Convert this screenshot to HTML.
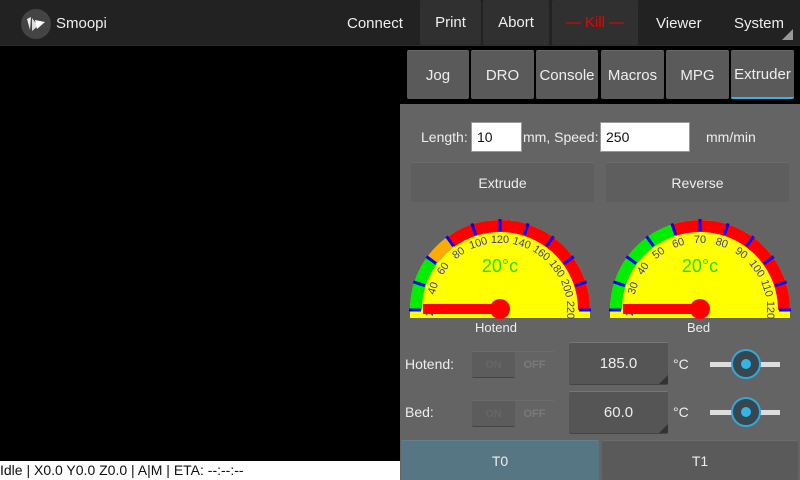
<!DOCTYPE html>
<html><head><meta charset="utf-8"><style>
*{margin:0;padding:0;box-sizing:border-box}
body{width:800px;height:480px;background:#000;font-family:"Liberation Sans",sans-serif;position:relative;overflow:hidden;color:#eee}
.a{position:absolute}
.hb{position:absolute;top:0;height:45px;background:#303030;border-radius:2px;color:#eee;font-size:15px;display:flex;align-items:center;justify-content:center}
.tab{position:absolute;top:50px;height:49px;background:#5a5a5a;border-top:1px solid #6a6a6a;border-radius:2px;font-size:15px;display:flex;align-items:center;justify-content:center;color:#eee}
.btn{position:absolute;background:#5e5e5e;border-top:1px solid #6c6c6c;border-radius:2px;font-size:14px;display:flex;align-items:center;justify-content:center;color:#eee}
.lbl{position:absolute;font-size:14px;color:#eee}
.inp{position:absolute;background:#fff;border:1px solid #999;color:#111;font-size:14px;padding-left:5px;display:flex;align-items:center}
.num{position:absolute;background:#555;border-top:1px solid #777;border-bottom:1px solid #444;border-radius:2px;font-size:15px;display:flex;align-items:center;justify-content:center;color:#eee;overflow:hidden}
.num:after{content:"";position:absolute;right:0;bottom:0;border-left:9px solid transparent;border-bottom:9px solid #333}
.sw{position:absolute;width:82px;height:27px}
.sw .on{position:absolute;left:0;top:0;width:43px;height:27px;background:#5c5c5c;border-top:1px solid #6c6c6c;border-bottom:1px solid #444;border-radius:2px;font-size:11px;font-weight:bold;color:#666;display:flex;align-items:center;justify-content:center}
.sw .off{position:absolute;left:43px;top:0;width:39px;height:27px;border-top:1px solid #6c6c6c;font-size:11px;font-weight:bold;color:#7a7a7a;display:flex;align-items:center;justify-content:center}
.sl{position:absolute;width:70px;height:30px}
.sl .tr{position:absolute;left:0;top:13px;width:70px;height:5px;background:#ddd}
.sl .k{position:absolute;left:21px;top:0;width:30px;height:30px;border-radius:50%;background:#36474f;border:2px solid #33a8dc}
.sl .k:after{content:"";position:absolute;left:8px;top:8px;width:10px;height:10px;border-radius:50%;background:#33b5e5}
</style></head><body>
<div class="a" style="left:0;top:0;width:800px;height:46px;background:#222;border-bottom:1px solid #2c2c2c"></div>
<div class="a" style="left:21px;top:9px;width:30px;height:30px;border-radius:50%;background:#444"></div>
<svg class="a" style="left:21px;top:9px" width="30" height="30"><polygon points="6,10 10,8 9,21" fill="#eee"/><polygon points="11,9 17,17 11,22" fill="#ddd"/><polygon points="14,11 24,13 16,20" fill="#fff"/></svg>
<div class="a" style="left:56px;top:15px;font-size:15px;color:#eee">Smoopi</div>
<div class="a" style="left:347px;top:15px;font-size:15px;color:#eee">Connect</div>
<div class="hb" style="left:420px;width:61px">Print</div>
<div class="hb" style="left:483px;width:66px">Abort</div>
<div class="hb" style="left:552px;width:86px;color:#e00">— Kill —</div>
<div class="a" style="left:656px;top:15px;font-size:15px;color:#eee">Viewer</div>
<div class="a" style="left:734px;top:15px;font-size:15px;color:#eee">System</div>
<div class="a" style="left:782px;top:29px;border-left:11px solid transparent;border-bottom:11px solid #999"></div>

<div class="tab" style="left:407px;width:62px">Jog</div>
<div class="tab" style="left:471px;width:63px">DRO</div>
<div class="tab" style="left:536px;width:62px">Console</div>
<div class="tab" style="left:601px;width:63px">Macros</div>
<div class="tab" style="left:666px;width:63px">MPG</div>
<div class="tab" style="left:731px;width:63px;border-bottom:2px solid #33b5e5">Extruder</div>

<div class="a" style="left:400px;top:104px;width:400px;height:376px;background:#646464"></div>
<div class="lbl" style="left:421px;top:129px">Length:</div>
<div class="inp" style="left:471px;top:122px;width:51px;height:30px">10</div>
<div class="lbl" style="left:523px;top:129px">mm, Speed:</div>
<div class="inp" style="left:600px;top:122px;width:90px;height:30px">250</div>
<div class="lbl" style="left:706px;top:129px">mm/min</div>
<div class="btn" style="left:411px;top:162px;width:183px;height:40px">Extrude</div>
<div class="btn" style="left:606px;top:162px;width:183px;height:40px">Reverse</div>

<svg class="a" style="left:0;top:0" width="800" height="480" font-family="Liberation Sans" >
<g>
<path d="M410 310 A90 90 0 0 1 590 310 L590 318 L410 318 Z" fill="#ff0"/>
<path d="M416 310 A84 84 0 0 1 432.04 260.63" fill="none" stroke="#0e0" stroke-width="12"/>
<path d="M432.04 260.63 A84 84 0 0 1 450.63 242.04" fill="none" stroke="#fa0" stroke-width="12"/>
<path d="M450.63 242.04 A84 84 0 0 1 584 310" fill="none" stroke="#f00" stroke-width="12"/>
<g stroke="#00f" stroke-width="3">
<line x1="500" y1="219" x2="500" y2="231" transform="rotate(-90 500 310)"/><line x1="500" y1="219" x2="500" y2="231" transform="rotate(-72 500 310)"/><line x1="500" y1="219" x2="500" y2="231" transform="rotate(-54 500 310)"/><line x1="500" y1="219" x2="500" y2="231" transform="rotate(-36 500 310)"/><line x1="500" y1="219" x2="500" y2="231" transform="rotate(-18 500 310)"/><line x1="500" y1="219" x2="500" y2="231"/><line x1="500" y1="219" x2="500" y2="231" transform="rotate(18 500 310)"/><line x1="500" y1="219" x2="500" y2="231" transform="rotate(36 500 310)"/><line x1="500" y1="219" x2="500" y2="231" transform="rotate(54 500 310)"/><line x1="500" y1="219" x2="500" y2="231" transform="rotate(72 500 310)"/><line x1="500" y1="219" x2="500" y2="231" transform="rotate(90 500 310)"/>
</g>
<g fill="#3a3aa0" font-size="11" text-anchor="middle">
<text x="500" y="243" transform="rotate(-90 500 310)">20</text><text x="500" y="243" transform="rotate(-72 500 310)">40</text><text x="500" y="243" transform="rotate(-54 500 310)">60</text><text x="500" y="243" transform="rotate(-36 500 310)">80</text><text x="500" y="243" transform="rotate(-18 500 310)">100</text><text x="500" y="243">120</text><text x="500" y="243" transform="rotate(18 500 310)">140</text><text x="500" y="243" transform="rotate(36 500 310)">160</text><text x="500" y="243" transform="rotate(54 500 310)">180</text><text x="500" y="243" transform="rotate(72 500 310)">200</text><text x="500" y="243" transform="rotate(90 500 310)">220</text>
</g>
<text x="500" y="272" font-size="18" fill="#2d2" text-anchor="middle">20°c</text>
<rect x="423" y="304" width="77" height="10" fill="#f00"/><circle cx="500" cy="309" r="10" fill="#f00"/>
</g>
<g>
<path d="M610 310 A90 90 0 0 1 790 310 L790 318 L610 318 Z" fill="#ff0"/>
<path d="M616 310 A84 84 0 0 1 674.04 230.11" fill="none" stroke="#0e0" stroke-width="12"/>
<path d="M674.04 230.11 A84 84 0 0 1 784 310" fill="none" stroke="#f00" stroke-width="12"/>
<g stroke="#00f" stroke-width="3">
<line x1="700" y1="219" x2="700" y2="231" transform="rotate(-90 700 310)"/><line x1="700" y1="219" x2="700" y2="231" transform="rotate(-72 700 310)"/><line x1="700" y1="219" x2="700" y2="231" transform="rotate(-54 700 310)"/><line x1="700" y1="219" x2="700" y2="231" transform="rotate(-36 700 310)"/><line x1="700" y1="219" x2="700" y2="231" transform="rotate(-18 700 310)"/><line x1="700" y1="219" x2="700" y2="231"/><line x1="700" y1="219" x2="700" y2="231" transform="rotate(18 700 310)"/><line x1="700" y1="219" x2="700" y2="231" transform="rotate(36 700 310)"/><line x1="700" y1="219" x2="700" y2="231" transform="rotate(54 700 310)"/><line x1="700" y1="219" x2="700" y2="231" transform="rotate(72 700 310)"/><line x1="700" y1="219" x2="700" y2="231" transform="rotate(90 700 310)"/>
</g>
<g fill="#3a3aa0" font-size="11" text-anchor="middle">
<text x="700" y="243" transform="rotate(-90 700 310)">20</text><text x="700" y="243" transform="rotate(-72 700 310)">30</text><text x="700" y="243" transform="rotate(-54 700 310)">40</text><text x="700" y="243" transform="rotate(-36 700 310)">50</text><text x="700" y="243" transform="rotate(-18 700 310)">60</text><text x="700" y="243">70</text><text x="700" y="243" transform="rotate(18 700 310)">80</text><text x="700" y="243" transform="rotate(36 700 310)">90</text><text x="700" y="243" transform="rotate(54 700 310)">100</text><text x="700" y="243" transform="rotate(72 700 310)">110</text><text x="700" y="243" transform="rotate(90 700 310)">120</text>
</g>
<text x="700" y="272" font-size="18" fill="#2d2" text-anchor="middle">20°c</text>
<rect x="623" y="304" width="77" height="10" fill="#f00"/><circle cx="700" cy="309" r="10" fill="#f00"/>
</g>
</svg>
<div class="lbl" style="left:475px;top:320px;font-size:13px">Hotend</div>
<div class="lbl" style="left:687px;top:320px;font-size:13px">Bed</div>

<div class="lbl" style="left:405px;top:356px">Hotend:</div>
<div class="sw" style="left:472px;top:351px"><div class="on">ON</div><div class="off">OFF</div></div>
<div class="num" style="left:569px;top:342px;width:99px;height:43px">185.0</div>
<div class="lbl" style="left:673px;top:356px">°C</div>
<div class="sl" style="left:710px;top:349px"><div class="tr"></div><div class="k"></div></div>

<div class="lbl" style="left:405px;top:404px">Bed:</div>
<div class="sw" style="left:472px;top:400px"><div class="on">ON</div><div class="off">OFF</div></div>
<div class="num" style="left:569px;top:391px;width:99px;height:43px">60.0</div>
<div class="lbl" style="left:673px;top:404px">°C</div>
<div class="sl" style="left:710px;top:397px"><div class="tr"></div><div class="k"></div></div>

<div class="btn" style="left:401px;top:440px;width:198px;height:40px;background:#557682;border-top:1px solid #5f808c">T0</div>
<div class="btn" style="left:602px;top:440px;width:196px;height:40px;background:#5a5a5a">T1</div>

<div class="a" style="left:0;top:461px;width:400px;height:19px;background:#fff;color:#111;font-size:14px;line-height:19px">Idle | X0.0 Y0.0 Z0.0 | A|M | ETA: --:--:--</div>
</body></html>
